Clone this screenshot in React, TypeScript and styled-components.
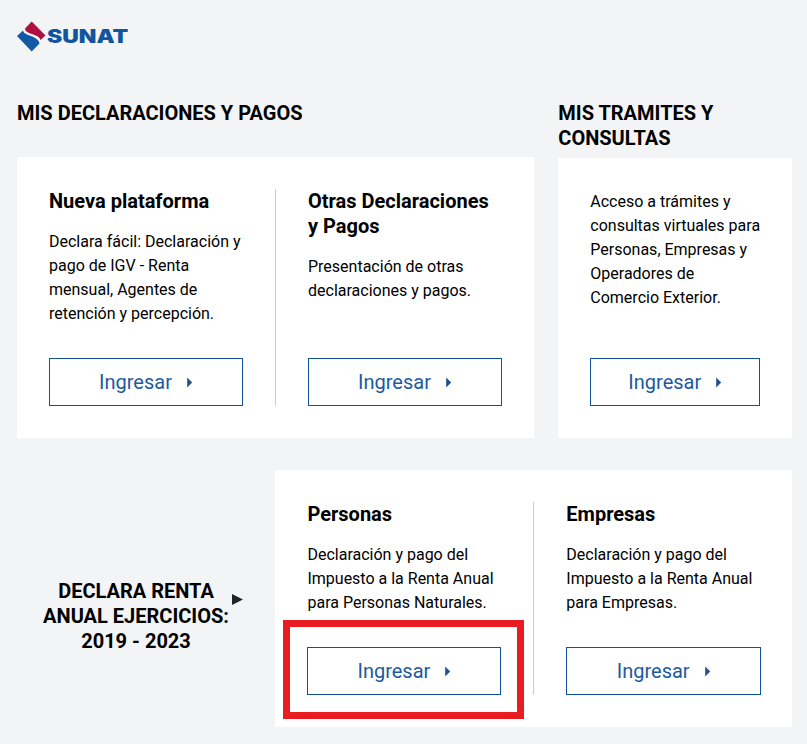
import React from "react";
import styled, { createGlobalStyle } from "styled-components";

const Global = createGlobalStyle`
  html, body { margin: 0; padding: 0; background: #f3f4f6; }
  body { font-family: Roboto, "Liberation Sans", sans-serif; color: #000; }
  * { box-sizing: border-box; }
`;
const Page = styled.div`
  width: 807px; height: 744px; overflow: hidden; padding: 20px 15px 0 17px; position: relative;
`;
const LogoWrap = styled.div`
  display: flex; align-items: center; height: 32px; gap: 1px; margin-bottom: 48px;
`;
const LogoText = styled.span`
  font-family: Inter, sans-serif; font-weight: 900; font-size: 18.5px; color: #11559f;
  display: inline-block; transform: scaleX(1.24); transform-origin: left center;
`;
const TopGrid = styled.div`
  display: grid; grid-template-columns: 517px 234px; column-gap: 24.3px;
`;
const Section = styled.section`
  display: flex; flex-direction: column;
`;
const SectionTitle = styled.h2<{ $height: number }>`
  margin: 0; padding-top: 1px; font-size: 20px; line-height: 25px; font-weight: 700; text-transform: uppercase;
  height: ${(p) => p.$height}px;
`;
const Card = styled.div<{ $height: number }>`
  background: #fff; display: flex; padding: 32px 0; height: ${(p) => p.$height}px;
`;
const Col = styled.div<{ $divider?: boolean }>`
  flex: 1; padding: 0 32px; display: flex; flex-direction: column;
  border-right: ${(p) => (p.$divider ? "1px solid #ccc" : "none")};
`;
const CardTitle = styled.h3`
  margin: 0 0 16px; font-size: 20px; line-height: 25px; font-weight: 700;
`;
const CardText = styled.p`
  margin: 0; font-size: 16px; line-height: 24px; flex: 1;
`;
const Btn = styled.a`
  display: flex; align-items: center; justify-content: center; gap: 14px; height: 48px;
  border: 1px solid #0f5299; color: #1c5aa0; font-size: 20px; background: #fff;
`;
const BottomRow = styled.div`
  display: flex; margin-top: 32px; height: 257px;
`;
const Aside = styled.div`
  width: 258.45px; padding-left: 23.5px; display: flex; align-items: center;
`;
const AsideText = styled.h2`
  margin: 36px 0 0; width: 191px; flex: none; text-align: center; font-size: 20px; line-height: 25px; font-weight: 700; text-transform: uppercase;
`;
const AsideArrow = styled.svg`
  flex: none; margin-top: 1px; margin-left: 0.5px;
`;
const BottomCard = styled(Card)`
  flex: 1; display: grid; grid-template-columns: 258.9px 1fr;
`;
const LastCol = styled(Col)`
  padding-right: 31px;
`;
const Highlight = styled.div`
  position: absolute; left: 283px; top: 620px; width: 241px; height: 99px; border: 7px solid #e81c21; pointer-events: none;
`;

const Caret = () => (
  <svg width="7" height="11" viewBox="0 0 7 11"><path d="M1.2 0.5 L6.2 5.5 L1.2 10.5 Z" fill="#254f86" /></svg>
);
const Enter = () => <Btn>Ingresar<Caret /></Btn>;

const Logo = () => (
  <LogoWrap>
    <svg width="29" height="31" viewBox="0 0 29 31">
      <path d="M14.7 0.5 L28.5 14.5 L23.5 19 C22 13 11 13.5 8.5 9.5 L8 7.5 Z" fill="#ae1040" />
      <path d="M0 15 L6 9.5 C7 15.5 21 14 22.5 22.5 L14.7 30.5 Z" fill="#1259a6" />
    </svg>
    <LogoText>SUNAT</LogoText>
  </LogoWrap>
);

export default function App() {
  return (
    <Page>
      <Global />
      <Logo />
      <TopGrid>
        <Section>
          <SectionTitle $height={57}>Mis declaraciones y pagos</SectionTitle>
          <Card $height={281}>
            <Col $divider>
              <CardTitle>Nueva plataforma</CardTitle>
              <CardText>Declara fácil: Declaración y pago de IGV - Renta mensual, Agentes de retención y percepción.</CardText>
              <Enter />
            </Col>
            <Col>
              <CardTitle>Otras Declaraciones y Pagos</CardTitle>
              <CardText>Presentación de otras declaraciones y pagos.</CardText>
              <Enter />
            </Col>
          </Card>
        </Section>
        <Section>
          <SectionTitle $height={58}>Mis tramites y consultas</SectionTitle>
          <Card $height={280}>
            <Col>
              <CardText>Acceso a trámites y consultas virtuales para Personas, Empresas y Operadores de Comercio Exterior.</CardText>
              <Enter />
            </Col>
          </Card>
        </Section>
      </TopGrid>
      <BottomRow>
        <Aside>
          <AsideText>Declara renta anual ejercicios: 2019 - 2023</AsideText>
          <AsideArrow width="11" height="11" viewBox="0 0 11 11"><path d="M0 0 L11 5.5 L0 11 Z" fill="#222" /></AsideArrow>
        </Aside>
        <BottomCard $height={257}>
          <Col $divider>
            <CardTitle>Personas</CardTitle>
            <CardText>Declaración y pago del Impuesto a la Renta Anual para Personas Naturales.</CardText>
            <Enter />
          </Col>
          <LastCol>
            <CardTitle>Empresas</CardTitle>
            <CardText>Declaración y pago del Impuesto a la Renta Anual para Empresas.</CardText>
            <Enter />
          </LastCol>
        </BottomCard>
      </BottomRow>
      <Highlight />
    </Page>
  );
}
